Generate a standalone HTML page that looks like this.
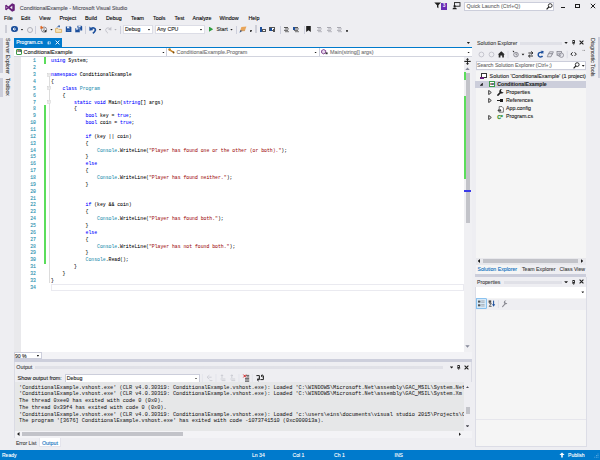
<!DOCTYPE html>
<html><head><meta charset="utf-8">
<style>
html,body{margin:0;padding:0;}
body{width:600px;height:460px;overflow:hidden;background:#EEEEF2;position:relative;font-family:"Liberation Sans",sans-serif;font-size:5.3px;color:#1E1E1E;-webkit-text-stroke-width:0.1px;}
.a{position:absolute;white-space:pre;line-height:1;}
.t{position:absolute;white-space:pre;line-height:7px;height:7px;}
.m{font-family:"Liberation Mono",monospace;}
.k{color:#0000FF}.c{color:#2B91AF}.s{color:#A31515}
#code{-webkit-text-stroke-width:0.04px;position:absolute;left:51px;top:58.4px;font-family:"Liberation Mono",monospace;font-size:4.8px;line-height:6.86px;white-space:pre;color:#000;}
#ln{position:absolute;left:21px;width:15px;top:58.4px;font-family:"Liberation Mono",monospace;font-size:4.8px;line-height:6.86px;white-space:pre;color:#2B91AF;text-align:right;}
#out{-webkit-text-stroke-width:0.04px;position:absolute;left:19px;top:384.7px;font-family:"Liberation Mono",monospace;font-size:5.245px;line-height:6.7px;white-space:pre;color:#1E1E1E;}
.dots{position:absolute;height:3px;background-image:radial-gradient(circle,#C2C4D0 0.48px,transparent 0.62px);background-size:1.76px 1.5px;}
</style></head><body>

<!-- title bar -->
<svg class="a" style="left:5px;top:3.2px" width="10" height="9" viewBox="0 0 14 12"><path d="M10 0.2 L13.7 1.9 L13.7 10.1 L10 11.8 L4.6 7.4 L2 10 L0.3 9 L0.3 3 L2 2 L4.6 4.6 Z M10.2 3.6 L7 6 L10.2 8.4 Z M2.1 4.6 L2.1 7.4 L3.5 6 Z" fill="#68217A" fill-rule="evenodd"/></svg>
<div class="t" style="left:19.8px;top:4.6px;font-size:5.4px;color:#505058">ConditionalExample - Microsoft Visual Studio</div>
<!-- title right -->
<svg class="a" style="left:433.8px;top:2.4px" width="8" height="7" viewBox="0 0 8 7"><path d="M0.3 0.5 H7 L4.4 3.3 V6.3 L3 5.2 V3.3 Z" fill="#1E1E1E"/></svg>
<div class="a" style="left:441px;top:3px;width:6px;height:6.6px;background:#6A2DB5;color:#fff;font-size:4.6px;line-height:6.8px;text-align:center">3</div>
<svg class="a" style="left:451.8px;top:2.2px" width="9" height="8" viewBox="0 0 9 8"><rect x="2.5" y="0.6" width="5.5" height="3.6" fill="none" stroke="#1E1E1E" stroke-width="0.9"/><path d="M0.5 7.2 C0.5 5 4.8 5 4.8 7.2 Z" fill="#1E1E1E"/><circle cx="2.6" cy="4.2" r="1.1" fill="#1E1E1E"/></svg>
<div class="a" style="left:464.3px;top:1.5px;width:89.4px;height:9.2px;background:#fff;border:0.5px solid #CCCEDB;box-sizing:border-box"></div>
<div class="t" style="left:466.5px;top:2.8px;font-size:5.4px;color:#6D6D6D">Quick Launch (Ctrl+Q)</div>
<svg class="a" style="left:545.5px;top:2.6px" width="7" height="7" viewBox="0 0 7 7"><circle cx="4.2" cy="2.6" r="1.9" fill="none" stroke="#1E1E1E" stroke-width="0.9"/><path d="M2.8 4 L0.6 6.3" stroke="#1E1E1E" stroke-width="1.1"/></svg>
<div class="a" style="left:560.5px;top:6.6px;width:4.2px;height:1.3px;background:#1E1E1E"></div>
<div class="a" style="left:575px;top:3.9px;width:4.6px;height:4.2px;border:0.9px solid #1E1E1E;border-top-width:1.6px;box-sizing:border-box"></div>
<svg class="a" style="left:589.8px;top:3.2px" width="6" height="6" viewBox="0 0 6 6"><path d="M0.8 0.8 L5.2 5.2 M5.2 0.8 L0.8 5.2" stroke="#1E1E1E" stroke-width="1"/></svg>

<!-- menu -->
<div id="menu" style="font-size:5.35px;color:#000">
<div class="t" style="left:4px;top:14.9px">File</div>
<div class="t" style="left:21px;top:14.9px">Edit</div>
<div class="t" style="left:39px;top:14.9px">View</div>
<div class="t" style="left:59.5px;top:14.9px">Project</div>
<div class="t" style="left:85px;top:14.9px">Build</div>
<div class="t" style="left:106px;top:14.9px">Debug</div>
<div class="t" style="left:131px;top:14.9px">Team</div>
<div class="t" style="left:153px;top:14.9px">Tools</div>
<div class="t" style="left:174.5px;top:14.9px">Test</div>
<div class="t" style="left:192.5px;top:14.9px">Analyze</div>
<div class="t" style="left:219.5px;top:14.9px">Window</div>
<div class="t" style="left:248.5px;top:14.9px">Help</div>
</div>

<!-- toolbar -->
<div id="tb">
<div class="a" style="left:5px;top:25.2px;width:2.2px;height:7.6px;background-image:radial-gradient(circle,#B4B6C4 0.4px,transparent 0.55px);background-size:1.1px 1.5px"></div>
<div class="a" style="left:11.4px;top:26px;width:6.2px;height:6.2px;border-radius:50%;background:#1C4F9C"></div>
<svg class="a" style="left:12.4px;top:27px" width="5" height="5" viewBox="0 0 5 5"><path d="M4 2.1 H1.2 M2.5 0.7 L1 2.1 L2.5 3.5" fill="none" stroke="#fff" stroke-width="0.9"/></svg>
<div class="a" style="left:20.8px;top:29.0px;width:2.4px;height:1.5px;background:#1E1E1E;clip-path:polygon(0 0,100% 0,50% 100%)"></div>
<div class="a" style="left:26.5px;top:26.6px;width:4.8px;height:4.8px;border-radius:50%;border:0.7px solid #B0B0B8;box-sizing:content-box"></div>
<div class="a" style="left:35.2px;top:25.5px;width:0.6px;height:8px;background:#CCCEDB"></div>
<!-- new project -->
<svg class="a" style="left:39px;top:25px" width="10" height="9" viewBox="39 25 10 9"><circle cx="44" cy="29.6" r="2.6" fill="#F4F4F6" stroke="#6E6E78" stroke-width="0.8"/><path d="M43 31.4 Q44.6 30 44 28" fill="none" stroke="#555" stroke-width="0.7"/><rect x="44.6" y="30.2" width="1.8" height="2" fill="#2A2A2A"/><path d="M41.6 25.4 L42.2 26.8 L43.6 27.2 L42.4 28 L42.4 29.4 L41.4 28.4 L40 28.8 L40.6 27.6 L39.8 26.4 L41.2 26.6 Z" fill="#E0641E"/></svg>
<div class="a" style="left:50.3px;top:29.0px;width:2.4px;height:1.5px;background:#1E1E1E;clip-path:polygon(0 0,100% 0,50% 100%)"></div>
<!-- open -->
<svg class="a" style="left:55px;top:25px" width="8" height="9" viewBox="55 25 8 9"><path d="M55.6 28.6 H58 L58.8 29.4 H61.6 V32.4 H55.6 Z" fill="#F6E3BC" stroke="#D9A857" stroke-width="0.8"/><path d="M57 27.6 Q57.6 26 59.4 26.2 M58.6 25.4 L60 26.3 L58.8 27.4" fill="none" stroke="#1C4F9C" stroke-width="0.8"/></svg>
<!-- save -->
<svg class="a" style="left:65px;top:25px" width="8" height="9" viewBox="65 25 8 9"><path d="M65.8 26.4 H70.6 L71.4 27.2 V32 H65.8 Z" fill="#1C4F9C"/><rect x="67" y="26.4" width="2.8" height="1.9" fill="#E6ECF6"/><rect x="69" y="26.6" width="0.7" height="1.3" fill="#1C4F9C"/><rect x="67" y="29.8" width="3.2" height="1.4" fill="#3F6FB5"/></svg>
<!-- save all -->
<svg class="a" style="left:74px;top:25px" width="10" height="9" viewBox="74 25 10 9"><path d="M77.4 25.8 H81.4 L82.2 26.6 V30.4 H77.4 Z" fill="#1C4F9C"/><rect x="78.4" y="25.8" width="2.2" height="1.5" fill="#E6ECF6"/><path d="M75 28 H79.2 L80 28.8 V32.6 H75 Z" fill="#1C4F9C" stroke="#EEEEF2" stroke-width="0.5"/><rect x="76" y="28.2" width="2.2" height="1.4" fill="#E6ECF6"/></svg>
<div class="a" style="left:85.4px;top:25.5px;width:0.6px;height:8px;background:#CCCEDB"></div>
<!-- undo -->
<svg class="a" style="left:88.5px;top:25.8px" width="8" height="8" viewBox="0 0 8 8"><path d="M1.6 3.2 C3.4 0.9 7 1.9 6.3 4.6 C5.9 5.8 5 6.7 3.8 7.3" fill="none" stroke="#1C4F9C" stroke-width="1.6"/><path d="M0.4 0.6 L0.4 4.8 L4.4 4 Z" fill="#1C4F9C"/></svg>
<div class="a" style="left:98.8px;top:29.0px;width:2.4px;height:1.5px;background:#1E1E1E;clip-path:polygon(0 0,100% 0,50% 100%)"></div>
<svg class="a" style="left:104px;top:25.8px" width="8" height="8" viewBox="0 0 8 8"><path d="M6.5 3.2 C4.5 0.8 1 2 1.8 4.6 C2.2 5.8 3 6.6 4 7.2" fill="none" stroke="#C4C4CC" stroke-width="1"/><path d="M7.4 0.8 L7.4 4.4 L4 3.8 Z" fill="#C4C4CC"/></svg>
<div class="a" style="left:114.3px;top:29.0px;width:2.4px;height:1.5px;background:#B0B0B8;clip-path:polygon(0 0,100% 0,50% 100%)"></div>
<div class="a" style="left:119.5px;top:25.5px;width:0.6px;height:8px;background:#CCCEDB"></div>
<!-- debug combo -->
<div class="a" style="left:123px;top:24.5px;width:30px;height:9.5px;background:#fff;border:0.5px solid #DCDDE6;box-sizing:border-box"></div>
<div class="t" style="left:125px;top:25.8px;font-size:5.2px">Debug</div>
<div class="a" style="left:147.8px;top:29.0px;width:2.4px;height:1.5px;background:#1E1E1E;clip-path:polygon(0 0,100% 0,50% 100%)"></div>
<div class="a" style="left:155px;top:24.5px;width:50px;height:9.5px;background:#fff;border:0.5px solid #DCDDE6;box-sizing:border-box"></div>
<div class="t" style="left:157px;top:25.8px;font-size:5.2px">Any CPU</div>
<div class="a" style="left:199.8px;top:29.0px;width:2.4px;height:1.5px;background:#1E1E1E;clip-path:polygon(0 0,100% 0,50% 100%)"></div>
<!-- start -->
<div class="a" style="left:209px;top:26.6px;width:4.20px;height:5.20px;background:#2E9E3F;clip-path:polygon(0 0,100% 50%,0 100%)"></div>
<div class="t" style="left:216.5px;top:25.8px;font-size:5.3px">Start</div>
<div class="a" style="left:230.3px;top:29.0px;width:2.4px;height:1.5px;background:#1E1E1E;clip-path:polygon(0 0,100% 0,50% 100%)"></div>
<div class="a" style="left:235.6px;top:25.5px;width:0.6px;height:8px;background:#CCCEDB"></div>
<svg class="a" style="left:238.5px;top:25.8px" width="8" height="8" viewBox="0 0 8 8"><path d="M2.4 1 L7.4 0.6 L6 4.6 L1 5 Z" fill="#E8A55A"/><path d="M0.6 6.8 L1.2 4.2 L3.4 4.8 Z" fill="#1C4F9C"/><path d="M1 5 L6 4.6" stroke="#B9772B" stroke-width="0.5"/></svg>
<div class="a" style="left:249.6px;top:29.6px;width:2.2px;height:0.6px;background:#444"></div>
<div class="a" style="left:249.6px;top:30.9px;width:2.2px;height:1.5px;background:#333;clip-path:polygon(0 0,100% 0,50% 100%)"></div>
<div class="a" style="left:254.6px;top:25.2px;width:2.2px;height:7.6px;background-image:radial-gradient(circle,#B4B6C4 0.4px,transparent 0.55px);background-size:1.1px 1.5px"></div>
<!-- small icons -->
<div class="a" style="left:260px;top:27px;width:1.6px;height:4.5px;background:#1C4F9C"></div>
<div class="a" style="left:262.2px;top:28.6px;width:3.8px;height:3px;border:0.6px solid #555;box-sizing:border-box;background:#fff"></div>
<div class="a" style="left:269px;top:26.6px;width:6px;height:4.8px;border:0.6px solid #555;box-sizing:border-box;background:#fff"></div>
<div class="a" style="left:269.8px;top:27.6px;width:2px;height:3px;background:#1C4F9C"></div>
<div class="a" style="left:273px;top:29px;width:2.4px;height:3px;background:#555"></div>
<div class="a" style="left:279.7px;top:25.5px;width:0.6px;height:8px;background:#CCCEDB"></div>
<div class="a" style="left:284px;top:27px;width:4px;height:0.7px;background:#555;box-shadow:1px 1.4px 0 #777,0 2.8px 0 #555,1px 4.2px 0 #777"></div>
<div class="a" style="left:294px;top:27px;width:4px;height:0.7px;background:#555;box-shadow:1px 1.4px 0 #777,0 2.8px 0 #555,1px 4.2px 0 #777"></div>
<div class="a" style="left:293px;top:26.5px;width:1.5px;height:3px;background:#1C4F9C"></div>
<div class="a" style="left:303.7px;top:25.5px;width:0.6px;height:8px;background:#CCCEDB"></div>
<div class="a" style="left:306.2px;top:25.6px;width:4.6px;height:6.4px;background:#1E1E1E;clip-path:polygon(0 0,100% 0,100% 100%,50% 72%,0 100%)"></div>
<div class="a" style="left:317px;top:27px;width:3.6px;height:0.6px;background:#A8A8B0;box-shadow:1px 1.4px 0 #B8B8C0,0 2.8px 0 #A8A8B0,1px 4.2px 0 #B8B8C0"></div>
<div class="a" style="left:327px;top:27px;width:3.6px;height:0.6px;background:#A8A8B0;box-shadow:1px 1.4px 0 #B8B8C0,0 2.8px 0 #A8A8B0,1px 4.2px 0 #B8B8C0"></div>
<div class="a" style="left:337px;top:27px;width:3.6px;height:0.6px;background:#A8A8B0;box-shadow:1px 1.4px 0 #B8B8C0,0 2.8px 0 #A8A8B0,1px 4.2px 0 #B8B8C0"></div>
<div class="a" style="left:345.9px;top:29.6px;width:2.2px;height:0.6px;background:#444"></div>
<div class="a" style="left:345.9px;top:30.9px;width:2.2px;height:1.5px;background:#333;clip-path:polygon(0 0,100% 0,50% 100%)"></div>
</div>

<!-- left strip -->
<div class="a" style="left:0;top:37.8px;width:2.8px;height:34.8px;background:#CCCEDB"></div>
<div class="a" style="left:0;top:77.8px;width:2.8px;height:19.4px;background:#CCCEDB"></div>
<div class="a" style="left:9.9px;top:38px;font-size:5.2px;transform:rotate(90deg);transform-origin:0 0;color:#444">Server Explorer</div>
<div class="a" style="left:9.9px;top:77.5px;font-size:5.2px;transform:rotate(90deg);transform-origin:0 0;color:#444">Toolbox</div>

<!-- doc tab -->
<div class="a" style="left:14px;top:38px;width:48px;height:9px;background:#007ACC"></div>
<div class="t" style="left:16.2px;top:39.1px;font-size:5.15px;color:#fff">Program.cs</div>
<svg class="a" style="left:46.8px;top:40.6px" width="4" height="4" viewBox="0 0 4 4"><rect x="1.3" y="0.9" width="2.2" height="2" fill="none" stroke="#CFE6F6" stroke-width="0.6"/><path d="M1.2 0.3 V3.6 M0 2 H1.2" stroke="#CFE6F6" stroke-width="0.6"/></svg>
<svg class="a" style="left:54.5px;top:40px" width="5" height="5" viewBox="0 0 5 5"><path d="M0.6 0.6 L4.4 4.4 M4.4 0.6 L0.6 4.4" stroke="#fff" stroke-width="0.9"/></svg>
<div class="a" style="left:14px;top:46.6px;width:458px;height:1.3px;background:#007ACC"></div>
<div class="a" style="left:466.6px;top:41.8px;width:3.60px;height:2.10px;background:#1E1E1E;clip-path:polygon(0 0,100% 0,50% 100%)"></div>

<!-- nav bar -->
<div class="a" style="left:14px;top:47.9px;width:458px;height:8.6px;background:#fff"></div>
<div class="a" style="left:16.2px;top:49.1px;width:6.2px;height:5.8px;border:0.8px solid #3C9A4B;border-radius:1px;box-sizing:border-box;background:#fff"></div>
<div class="a m" style="left:17.3px;top:50.4px;font-size:3.4px;font-weight:bold;color:#333">C#</div>
<div class="t" style="left:23.6px;top:48.8px;font-size:5.5px">ConditionalExample</div>
<div class="a" style="left:162px;top:51.6px;width:2.8px;height:1.8px;background:#1E1E1E;clip-path:polygon(0 0,100% 0,50% 100%)"></div>
<div class="a" style="left:165.8px;top:48.4px;width:0.6px;height:7.6px;background:#CCCEDB"></div>
<svg class="a" style="left:167.5px;top:48.3px" width="7" height="6" viewBox="0 0 7 6"><circle cx="1.6" cy="1.6" r="1.3" fill="#C27D1A"/><path d="M2.3 2.3 L5.8 4.4" stroke="#C27D1A" stroke-width="1.4"/><circle cx="5.6" cy="4.5" r="0.9" fill="#7A4A0A"/></svg>
<div class="t" style="left:176.6px;top:48.8px;font-size:5.45px;color:#777">ConditionalExample.Program</div>
<div class="a" style="left:314.2px;top:51.6px;width:2.8px;height:1.8px;background:#1E1E1E;clip-path:polygon(0 0,100% 0,50% 100%)"></div>
<div class="a" style="left:318.6px;top:48.4px;width:0.6px;height:7.6px;background:#CCCEDB"></div>
<svg class="a" style="left:321px;top:49px" width="8" height="6" viewBox="0 0 8 6"><path d="M2.6 0.5 L4.7 1.6 L4.7 3.8 L2.6 4.9 L0.6 3.8 L0.6 1.6 Z" fill="#E9D9EE" stroke="#68217A" stroke-width="0.8"/><rect x="4.6" y="3.4" width="2" height="1.8" fill="#333"/></svg>
<div class="t" style="left:330px;top:48.9px;font-size:5.4px;color:#777">Main(string[] args)</div>
<div class="a" style="left:467.2px;top:51.6px;width:2.8px;height:1.8px;background:#1E1E1E;clip-path:polygon(0 0,100% 0,50% 100%)"></div>

<!-- editor -->
<div class="a" style="left:14px;top:56.4px;width:458px;height:0.9px;background:#D2D4DE"></div>
<div class="a" style="left:14px;top:57.2px;width:458px;height:294.8px;background:#fff"></div>
<div class="a" style="left:14px;top:57.2px;width:7.2px;height:294.8px;background:#E9E9EC"></div>
<div id="ln">1
2
3
4
5
6
7
8
9
10
11
12
13
14
15
16
17
18
19
20
21
22
23
24
25
26
27
28
29
30
31
32
33
34</div>
<div class="a" style="left:44px;top:57.2px;width:2px;height:6.9px;background:#5BDD5B"></div>
<div class="a" style="left:44px;top:105.3px;width:2px;height:158.5px;background:#5BDD5B"></div>
<!-- outline -->
<div class="a" style="left:48.6px;top:76px;width:0.5px;height:207px;background:#DCDCDC"></div>
<svg class="a" style="left:46.9px;top:72.6px" width="4" height="4" viewBox="0 0 4 4"><rect x="0.35" y="0.35" width="3.2" height="3.2" fill="#fff" stroke="#C4C4C4" stroke-width="0.45"/><path d="M1 1.95 H2.9" stroke="#9A9A9A" stroke-width="0.45"/></svg>
<svg class="a" style="left:46.9px;top:86.3px" width="4" height="4" viewBox="0 0 4 4"><rect x="0.35" y="0.35" width="3.2" height="3.2" fill="#fff" stroke="#C4C4C4" stroke-width="0.45"/><path d="M1 1.95 H2.9" stroke="#9A9A9A" stroke-width="0.45"/></svg>
<svg class="a" style="left:46.9px;top:100.0px" width="4" height="4" viewBox="0 0 4 4"><rect x="0.35" y="0.35" width="3.2" height="3.2" fill="#fff" stroke="#C4C4C4" stroke-width="0.45"/><path d="M1 1.95 H2.9" stroke="#9A9A9A" stroke-width="0.45"/></svg>
<div id="code"><span class="k">using</span> System;

<span class="k">namespace</span> ConditionalExample
{
    <span class="k">class</span> <span class="c">Program</span>
    {
        <span class="k">static</span> <span class="k">void</span> Main(<span class="k">string</span>[] args)
        {
            <span class="k">bool</span> key = <span class="k">true</span>;
            <span class="k">bool</span> coin = <span class="k">true</span>;

            <span class="k">if</span> (key || coin)
            {
                <span class="c">Console</span>.WriteLine(<span class="s">"Player has found one or the other (or both)."</span>);
            }
            <span class="k">else</span>
            {
                <span class="c">Console</span>.WriteLine(<span class="s">"Player has found neither."</span>);
            }


            <span class="k">if</span> (key &amp;&amp; coin)
            {
                <span class="c">Console</span>.WriteLine(<span class="s">"Player has found both."</span>);
            }
            <span class="k">else</span>
            {
                <span class="c">Console</span>.WriteLine(<span class="s">"Player has not found both."</span>);
            }
            <span class="c">Console</span>.Read();
        }
    }
}
</div>
<!-- current line box -->
<div class="a" style="left:50.5px;top:284.2px;width:413px;height:6.4px;border:0.6px solid #EAEAF0;box-sizing:border-box"></div>
<!-- v scrollbar -->
<div class="a" style="left:463.7px;top:57.2px;width:8.3px;height:294.8px;background:#F0F0F3"></div>
<svg class="a" style="left:464.2px;top:58.2px" width="7" height="7" viewBox="0 0 7 7"><path d="M0.3 3.4 H6.7" stroke="#1E1E1E" stroke-width="1.1"/><path d="M3.5 1 V6" stroke="#1E1E1E" stroke-width="0.9"/><path d="M3.5 0 L5.1 1.7 H1.9 Z M3.5 6.9 L5.1 5.2 H1.9 Z" fill="#1E1E1E"/></svg>
<div class="a" style="left:465.3px;top:67.4px;width:4.40px;height:2.60px;background:#868999;clip-path:polygon(0 100%,100% 100%,50% 0)"></div>
<div class="a" style="left:465.6px;top:72.8px;width:4px;height:149.8px;background:#C2C3C9"></div>
<div class="a" style="left:463.8px;top:71.5px;width:2.1px;height:8px;background:#5BDD5B"></div>
<div class="a" style="left:463.8px;top:96px;width:2.1px;height:83px;background:#5BDD5B"></div>
<div class="a" style="left:463.8px;top:189.8px;width:7.3px;height:2.2px;background:#3A3AE8"></div>
<div class="a" style="left:465.3px;top:345.2px;width:4.40px;height:2.60px;background:#868999;clip-path:polygon(0 0,100% 0,50% 100%)"></div>

<!-- zoom -->
<div class="a" style="left:14px;top:351.8px;width:458px;height:7.5px;background:#F3F3F6"></div>
<div class="a" style="left:14px;top:352.4px;width:27.5px;height:6.4px;background:#fff;border:0.5px solid #CCCEDB;box-sizing:border-box"></div>
<div class="t" style="left:14.9px;top:352.6px;font-size:5.2px">90 %</div>
<div class="a" style="left:36.5px;top:355px;width:2.80px;height:1.80px;background:#1E1E1E;clip-path:polygon(0 0,100% 0,50% 100%)"></div>
<div class="a" style="left:14px;top:359.3px;width:458px;height:2.9px;background:#CDCFDC"></div>

<!-- output -->
<div class="a" style="left:14px;top:362.2px;width:457.6px;height:76.1px;background:#EEEEF2;border:0.5px solid #DADBE4;border-top:0;box-sizing:border-box"></div>
<div class="t" style="left:16.2px;top:364.3px;font-size:5.4px;color:#444">Output</div>
<div class="dots" style="left:35px;top:366.2px;width:408px"></div>
<div class="a" style="left:449.7px;top:366.4px;width:3.80px;height:2.20px;background:#1E1E1E;clip-path:polygon(0 0,100% 0,50% 100%)"></div>
<svg class="a" style="left:457.2px;top:364.6px" width="3.4" height="5.4" viewBox="0 0 4 6"><rect x="0.9" y="0.35" width="2.2" height="3" fill="none" stroke="#1E1E1E" stroke-width="0.7"/><rect x="2.3" y="0.3" width="0.8" height="3" fill="#1E1E1E"/><path d="M0.1 3.5 H3.9" stroke="#1E1E1E" stroke-width="0.8"/><path d="M2 3.6 V5.9" stroke="#1E1E1E" stroke-width="0.7"/></svg>
<svg class="a" style="left:464px;top:364.8px" width="5" height="5" viewBox="0 0 5 5"><path d="M0.6 0.6 L4.4 4.4 M4.4 0.6 L0.6 4.4" stroke="#1E1E1E" stroke-width="1.1"/></svg>
<div class="t" style="left:17.5px;top:374.8px;font-size:5.48px">Show output from:</div>
<div class="a" style="left:65px;top:373.5px;width:135px;height:9px;background:#fff;border:0.5px solid #CCCEDB;box-sizing:border-box"></div>
<div class="t" style="left:66.8px;top:374.8px;font-size:5.3px">Debug</div>
<div class="a" style="left:194.8px;top:377.7px;width:2.4px;height:1.5px;background:#1E1E1E;clip-path:polygon(0 0,100% 0,50% 100%)"></div>
<svg class="a" style="left:200px;top:372px" width="70" height="12" viewBox="200 372 70 12">
<path d="M202.4 374 V382 M216 374 V382 M239 374 V382 M252.3 374 V382" stroke="#DCDDE6" stroke-width="0.6"/>
<g stroke="#C2C3CC" stroke-width="0.7" fill="none">
<path d="M209.4 375.2 L207 377.2 L209.4 379.2 M208.6 377.2 H211.6 M209.6 380.6 H212.4"/>
<path d="M222 374.8 V378 M220.8 376 L222 374.8 L223.2 376 M220.6 379 H225.4 M221.6 380.6 H225.4"/>
<path d="M231.8 374.8 V378 M230.6 376 L231.8 374.8 L233 376 M230.4 379 H235.2 M231.4 380.6 H235.2"/>
</g>
<path d="M246 375.4 H249.2 M246.6 376.9 H249.2 M245 378.4 H249.2 M245 379.9 H249.2 M245 381.3 H249.2" stroke="#333" stroke-width="0.75"/>
<path d="M243.4 374.6 L246 377.4 M246 374.6 L243.4 377.4" stroke="#D42020" stroke-width="1"/>
<g stroke="#1E1E1E" stroke-width="1" fill="none">
<path d="M256.4 375.6 H259.4 V379.6 H257.6"/><path d="M258.6 378.2 L257 379.6 L258.6 381"/>
<path d="M260.4 379.6 H263.4 V375.8 H261.6"/><path d="M262.4 374.6 L261 375.8 L262.4 377"/>
</g>
</svg>
<div class="a" style="left:14.5px;top:382px;width:449.5px;height:48.5px;background:#E6E7E8"></div>
<div id="out">'ConditionalExample.vshost.exe' (CLR v4.0.30319: ConditionalExample.vshost.exe): Loaded 'C:\WINDOWS\Microsoft.Net\assembly\GAC_MSIL\System.Net
'ConditionalExample.vshost.exe' (CLR v4.0.30319: ConditionalExample.vshost.exe): Loaded 'C:\WINDOWS\Microsoft.Net\assembly\GAC_MSIL\System.Xm
The thread 0xee0 has exited with code 0 (0x0).
The thread 0x39f4 has exited with code 0 (0x0).
'ConditionalExample.vshost.exe' (CLR v4.0.30319: ConditionalExample.vshost.exe): Loaded 'c:\users\eins\documents\visual studio 2015\Projects\C
The program '[3676] ConditionalExample.vshost.exe' has exited with code -1073741510 (0xc000013a).</div>
<div class="a" style="left:464px;top:382px;width:7.5px;height:48.5px;background:#EEEEF2"></div>
<!-- out v scroll -->
<div class="a" style="left:465.6px;top:386.2px;width:3.8px;height:2.3px;background:#4A4A52;clip-path:polygon(0 100%,100% 100%,50% 0)"></div>
<div class="a" style="left:465.8px;top:407px;width:4px;height:7.2px;background:#C2C3C9"></div>
<div class="a" style="left:465.6px;top:425.2px;width:3.8px;height:2.3px;background:#4A4A52;clip-path:polygon(0 0,100% 0,50% 100%)"></div>
<!-- out h scroll -->
<div class="a" style="left:14.5px;top:430.5px;width:457px;height:7.3px;background:#F3F3F6"></div>
<div class="a" style="left:17px;top:432.1px;width:2.5px;height:3.9px;background:#1E1E1E;clip-path:polygon(100% 0,0 50%,100% 100%)"></div>
<div class="a" style="left:22px;top:432.1px;width:161px;height:3.7px;background:#C2C3C9"></div>
<div class="a" style="left:458.6px;top:432.3px;width:2.4px;height:3.9px;background:#1E1E1E;clip-path:polygon(0 0,100% 50%,0 100%)"></div>
<!-- bottom tabs -->
<div class="t" style="left:16px;top:439.6px;font-size:5.05px;color:#444">Error List</div>
<div class="a" style="left:39.4px;top:437.8px;width:21.6px;height:9.2px;background:#fff;border:0.5px solid #E4E4EC;border-top:0;box-sizing:border-box"></div>
<div class="t" style="left:42px;top:439.5px;font-size:5.3px;color:#0E70C0">Output</div>

<!-- status bar -->
<div class="a" style="left:0;top:449.5px;width:600px;height:10.5px;background:#007ACC"></div>
<div class="t" style="left:2px;top:451.8px;font-size:5px;color:#fff">Ready</div>
<div class="t" style="left:252px;top:451.8px;font-size:5.1px;color:#fff">Ln 34</div>
<div class="t" style="left:292.5px;top:451.8px;font-size:5.1px;color:#fff">Col 1</div>
<div class="t" style="left:334px;top:451.8px;font-size:5.1px;color:#fff">Ch 1</div>
<div class="t" style="left:394.5px;top:451.8px;font-size:5.1px;color:#fff">INS</div>
<svg class="a" style="left:558.5px;top:452px" width="6" height="6" viewBox="0 0 6 6"><path d="M3 0.4 L5.6 3 H3.8 V5.6 H2.2 V3 H0.4 Z" fill="#fff"/></svg>
<div class="t" style="left:568px;top:451.8px;font-size:5.1px;color:#fff">Publish</div>

<svg class="a" style="left:593px;top:453px" width="7" height="7" viewBox="0 0 7 7"><g fill="#7DBCE8"><rect x="4.6" y="0.6" width="0.8" height="0.8"/><rect x="3" y="2.2" width="0.8" height="0.8"/><rect x="4.6" y="2.2" width="0.8" height="0.8"/><rect x="1.4" y="3.8" width="0.8" height="0.8"/><rect x="3" y="3.8" width="0.8" height="0.8"/><rect x="4.6" y="3.8" width="0.8" height="0.8"/></g></svg>
<!-- solution explorer -->
<div id="se">
<div class="t" style="left:477px;top:39.5px;font-size:5.3px;color:#444">Solution Explorer</div>
<div class="dots" style="left:520px;top:41.7px;width:42px"></div>
<div class="a" style="left:564.2px;top:41.8px;width:3.80px;height:2.20px;background:#1E1E1E;clip-path:polygon(0 0,100% 0,50% 100%)"></div>
<svg class="a" style="left:572.1px;top:40.2px" width="3.4" height="5.4" viewBox="0 0 4 6"><rect x="0.9" y="0.35" width="2.2" height="3" fill="none" stroke="#1E1E1E" stroke-width="0.7"/><rect x="2.3" y="0.3" width="0.8" height="3" fill="#1E1E1E"/><path d="M0.1 3.5 H3.9" stroke="#1E1E1E" stroke-width="0.8"/><path d="M2 3.6 V5.9" stroke="#1E1E1E" stroke-width="0.7"/></svg>
<svg class="a" style="left:578.8px;top:40.3px" width="5" height="5" viewBox="0 0 5 5"><path d="M0.6 0.6 L4.4 4.4 M4.4 0.6 L0.6 4.4" stroke="#1E1E1E" stroke-width="1.1"/></svg>
<!-- toolbar -->
<svg class="a" style="left:475px;top:49px" width="111" height="11" viewBox="475 49 111 11">
<circle cx="481.4" cy="54.5" r="2.4" fill="none" stroke="#B4B4BE" stroke-width="0.7"/>
<circle cx="491.5" cy="54.5" r="2.4" fill="none" stroke="#B4B4BE" stroke-width="0.7"/>
<path d="M501.3 51.2 L504.8 54.4 H503.9 V57.6 H502.2 V55.4 H500.4 V57.6 H498.7 V54.4 H497.8 Z" fill="#2A2A2A"/>
<path d="M508 50.8 V58.3" stroke="#CCCEDB" stroke-width="0.6"/>
<circle cx="516" cy="54.6" r="2.3" fill="#E4E4EA" stroke="#7A7A84" stroke-width="0.8"/>
<path d="M516 53.2 V54.8 H517.2" fill="none" stroke="#555" stroke-width="0.6"/>
<path d="M512.6 50.8 L514.4 50.9 L513.4 52.4 Z" fill="#1E1E1E"/>
<path d="M521.6 53.8 H524.4 L523 55.6 Z" fill="#1E1E1E"/>
<path d="M528.4 53 H532.6 M531.2 51.4 L533 53 L531.2 54.4 M533 56 H528.8 M530.2 54.6 L528.4 56 L530.2 57.6" fill="none" stroke="#1E1E1E" stroke-width="0.9"/>
<path d="M542.3 53.2 A2.3 2.3 0 1 0 542.5 55.8" fill="none" stroke="#1C4F9C" stroke-width="1.4"/>
<path d="M540.6 50.8 L543.6 51 L543.2 54 Z" fill="#1C4F9C"/>
<path d="M549.6 51.8 H553.4 L552 54.8 H548.2 Z" fill="#E4E4EA" stroke="#7A7A84" stroke-width="0.7"/>
<path d="M548.6 53.6 H552.4 L551 56.8 H547.2 Z" fill="#E4E4EA" stroke="#7A7A84" stroke-width="0.7"/>
<rect x="557" y="51.4" width="4.4" height="3.8" fill="#E4E4EA" stroke="#7A7A84" stroke-width="0.7"/>
<circle cx="561.4" cy="55.2" r="2.2" fill="#E4E4EA" stroke="#7A7A84" stroke-width="0.7"/>
<circle cx="559.2" cy="54.6" r="1.6" fill="none" stroke="#8A8A94" stroke-width="0.6"/>
<path d="M567.2 50.8 V58.3" stroke="#CCCEDB" stroke-width="0.6"/>
<path d="M572.6 52.3 L570.9 54.1 L572.6 55.9 M574.6 52.3 L576.3 54.1 L574.6 55.9" fill="none" stroke="#1E1E1E" stroke-width="1"/>
<path d="M582.6 50.4 H583.4 M584 50.4 H584.8" stroke="#555" stroke-width="0.7"/>
</svg>
<!-- search -->
<div class="a" style="left:475.5px;top:61.3px;width:110px;height:8.5px;background:#fff;border:0.5px solid #CCCEDB;box-sizing:border-box"></div>
<div class="t" style="left:477px;top:62.2px;font-size:5.2px;color:#6D6D6D">Search Solution Explorer (Ctrl+;)</div>
<svg class="a" style="left:572.6px;top:62.2px" width="7" height="7" viewBox="0 0 7 7"><circle cx="4.2" cy="2.6" r="1.9" fill="none" stroke="#1E1E1E" stroke-width="0.9"/><path d="M2.8 4 L0.6 6.3" stroke="#1E1E1E" stroke-width="1.1"/></svg>
<div class="a" style="left:581.8px;top:65px;width:2.80px;height:1.80px;background:#1E1E1E;clip-path:polygon(0 0,100% 0,50% 100%)"></div>
<!-- tree -->
<div class="a" style="left:475.5px;top:70.5px;width:110px;height:192px;background:#F5F5F5"></div>
<div class="a" style="left:475px;top:80.6px;width:111px;height:7.6px;background:#CCCEDB"></div>
<!-- sln icon -->
<div class="a" style="left:481.2px;top:73.4px;width:6px;height:5px;border:0.7px solid #333;border-top-width:1.3px;box-sizing:border-box;background:#fff"></div>
<div class="a" style="left:480.2px;top:76.6px;width:3.6px;height:2.8px;background:#68217A"></div>
<div class="t" style="left:489.6px;top:73px;font-size:5.36px">Solution 'ConditionalExample' (1 project)</div>
<div class="a" style="left:479.6px;top:82.6px;width:3.2px;height:3.2px;background:#1E1E1E;clip-path:polygon(100% 0,100% 100%,0 100%)"></div>
<div class="a" style="left:489px;top:81.3px;width:6px;height:5.6px;border:0.7px solid #3C9A4B;box-sizing:border-box;background:#fff"></div>
<div class="a m" style="left:490.2px;top:82.6px;font-size:3.2px;font-weight:bold;color:#333">C#</div>
<div class="t" style="left:497.3px;top:80.7px;font-size:5.15px;font-weight:bold">ConditionalExample</div>
<svg class="a" style="left:488px;top:90px" width="4" height="5" viewBox="0 0 4 5"><path d="M0.7 0.4 L3.3 2.5 L0.7 4.6 Z" fill="none" stroke="#1E1E1E" stroke-width="0.85"/></svg>
<svg class="a" style="left:496.8px;top:88.8px" width="7" height="7" viewBox="0 0 7 7"><path d="M0.9 6.1 L3.6 3.4" stroke="#1E1E1E" stroke-width="1.5" stroke-linecap="round"/><path d="M5.6 0.5 A2.1 2.1 0 1 0 6.5 2.9 L5 3.2 L3.9 2.1 L4.3 0.6 Z" fill="#1E1E1E"/></svg>
<div class="t" style="left:506px;top:88.8px;font-size:5.3px">Properties</div>
<svg class="a" style="left:488px;top:98.2px" width="4" height="5" viewBox="0 0 4 5"><path d="M0.7 0.4 L3.3 2.5 L0.7 4.6 Z" fill="none" stroke="#1E1E1E" stroke-width="0.85"/></svg>
<div class="a" style="left:497.2px;top:99.8px;width:1.6px;height:1.6px;background:#1E1E1E"></div>
<div class="a" style="left:498.8px;top:100.3px;width:1.2px;height:0.6px;background:#1E1E1E"></div>
<div class="a" style="left:500.3px;top:99px;width:2.6px;height:3.2px;background:#1E1E1E"></div>
<div class="t" style="left:506px;top:97px;font-size:5.3px">References</div>
<svg class="a" style="left:497px;top:105.6px" width="7" height="7" viewBox="0 0 7 7"><path d="M2.2 0.6 H5 L6.4 2 V6.2 H2.2 Z" fill="#fff" stroke="#444" stroke-width="0.7"/><path d="M0.4 4.4 L2 3 L2 5.8 Z" fill="#444"/><circle cx="3.2" cy="4.4" r="1.1" fill="#444"/></svg>
<div class="t" style="left:506px;top:105.2px;font-size:5.3px">App.config</div>
<svg class="a" style="left:488px;top:114.6px" width="4" height="5" viewBox="0 0 4 5"><path d="M0.7 0.4 L3.3 2.5 L0.7 4.6 Z" fill="none" stroke="#1E1E1E" stroke-width="0.85"/></svg>
<div class="a" style="left:497.2px;top:114.6px;font-size:5px;font-weight:bold;color:#2F8F2F;-webkit-text-stroke:0.25px #2F8F2F">C*</div>
<div class="t" style="left:506px;top:113.4px;font-size:5.3px">Program.cs</div>
<!-- se h scroll -->
<div class="a" style="left:475.5px;top:257.5px;width:110px;height:7px;background:#E8E8EC"></div>
<div class="a" style="left:477.6px;top:259px;width:2.4px;height:3.9px;background:#1E1E1E;clip-path:polygon(100% 0,0 50%,100% 100%)"></div>
<div class="a" style="left:482.6px;top:259px;width:95.1px;height:3.8px;background:#C2C3C9"></div>
<div class="a" style="left:580.9px;top:259px;width:2.4px;height:3.9px;background:#1E1E1E;clip-path:polygon(0 0,100% 50%,0 100%)"></div>
<!-- se tabs -->
<div class="a" style="left:475.5px;top:264.5px;width:44px;height:9.5px;background:#F5F5F5"></div>
<div class="t" style="left:477.5px;top:266px;font-size:5.2px;color:#0E70C0">Solution Explorer</div>
<div class="t" style="left:522px;top:266px;font-size:5.2px;color:#444">Team Explorer</div>
<div class="t" style="left:559.5px;top:266px;font-size:5.2px;color:#444">Class View</div>
</div>

<!-- properties -->
<div id="pr">
<div class="a" style="left:475px;top:274px;width:111.4px;height:2.7px;background:#CCCEDB"></div>
<div class="a" style="left:474.5px;top:276.5px;width:112px;height:170.8px;background:#F5F5F5;border:0.5px solid #DCDDE6;border-top:0;box-sizing:border-box"></div>
<div class="a" style="left:475px;top:276.5px;width:111px;height:10px;background:#EEEEF2"></div>
<div class="t" style="left:477px;top:279px;font-size:5.15px;color:#444">Properties</div>
<div class="dots" style="left:504px;top:280.6px;width:58px"></div>
<div class="a" style="left:564.2px;top:281.3px;width:3.80px;height:2.20px;background:#1E1E1E;clip-path:polygon(0 0,100% 0,50% 100%)"></div>
<svg class="a" style="left:572.1px;top:279.6px" width="3.4" height="5.4" viewBox="0 0 4 6"><rect x="0.9" y="0.35" width="2.2" height="3" fill="none" stroke="#1E1E1E" stroke-width="0.7"/><rect x="2.3" y="0.3" width="0.8" height="3" fill="#1E1E1E"/><path d="M0.1 3.5 H3.9" stroke="#1E1E1E" stroke-width="0.8"/><path d="M2 3.6 V5.9" stroke="#1E1E1E" stroke-width="0.7"/></svg>
<svg class="a" style="left:578.8px;top:279.3px" width="5" height="5" viewBox="0 0 5 5"><path d="M0.6 0.6 L4.4 4.4 M4.4 0.6 L0.6 4.4" stroke="#1E1E1E" stroke-width="1.1"/></svg>
<div class="a" style="left:475.5px;top:287px;width:110px;height:11px;background:#fff"></div>
<div class="a" style="left:581.4px;top:291.4px;width:2.80px;height:1.80px;background:#1E1E1E;clip-path:polygon(0 0,100% 0,50% 100%)"></div>
<div class="a" style="left:475.5px;top:298.5px;width:110px;height:11px;background:#EEEEF2"></div>
<svg class="a" style="left:475px;top:298px" width="40" height="12" viewBox="475 298 40 12">
<rect x="476.3" y="298.7" width="10.2" height="9.8" fill="#D6E9F8" stroke="#4BA3EA" stroke-width="0.6"/>
<rect x="478" y="300.6" width="2.4" height="2" fill="#555"/><rect x="478" y="304.3" width="2.4" height="2" fill="#555"/>
<path d="M481.2 300.9 H484.6 M481.2 302.3 H484.6 M481.2 304.6 H484.6 M481.2 306 H484.6" stroke="#8A8A92" stroke-width="0.6"/>
<rect x="488.6" y="300.4" width="2.6" height="2.4" fill="#4A4A4A"/><path d="M489.2 303.6 H491.4 L489.2 306.4 H491.6" fill="none" stroke="#4A4A4A" stroke-width="0.8"/>
<path d="M493.6 300.6 V305" stroke="#1C4F9C" stroke-width="1"/><path d="M492 304.2 H495.2 L493.6 306.8 Z" fill="#1C4F9C"/>
<path d="M498.4 300 V308" stroke="#CCCEDB" stroke-width="0.5"/>
<path d="M502.6 306.6 L504.9 304.2" stroke="#8A8A92" stroke-width="1.1" stroke-linecap="round"/>
<path d="M506.6 300.8 A1.8 1.8 0 1 0 507.3 302.9 L506 303.1 L505.1 302.2 L505.4 301 Z" fill="#8A8A92"/>
</svg>
<div class="a" style="left:475.5px;top:419px;width:110px;height:0.5px;background:#E6E6EC"></div>
</div>

<!-- right strip -->
<div class="a" style="left:597.7px;top:37.2px;width:2.3px;height:40.4px;background:#CCCEDB"></div>
<div class="a" style="left:595px;top:38.2px;font-size:5.3px;transform:rotate(90deg);transform-origin:0 0;color:#444">Diagnostic Tools</div>

</body></html>
